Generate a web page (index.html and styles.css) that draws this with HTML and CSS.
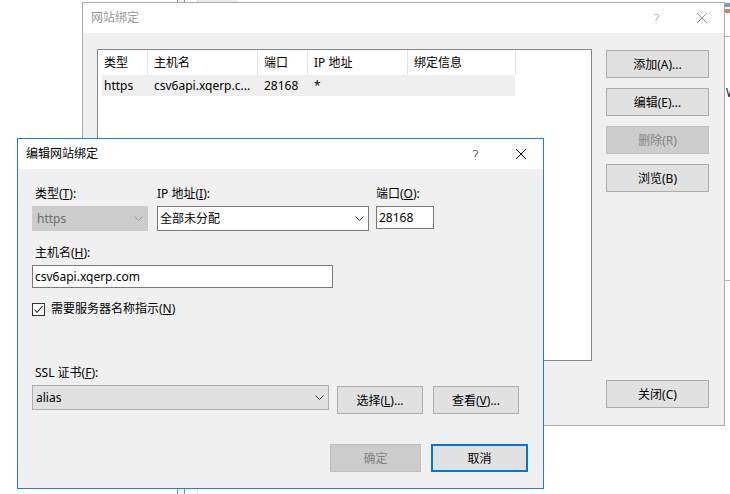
FILE: index.html
```html
<!DOCTYPE html>
<html lang="zh-CN">
<head>
    <meta charset="UTF-8">
    <meta name="viewport" content="width=device-width, initial-scale=1.0">
    <title>编辑网站绑定</title>
    <link rel="stylesheet" href="styles.css">
</head>
<body>
    <div class="desktop">
        <!-- bits of windows behind the dialogs -->
        <div class="behind behind-a"></div>
        <div class="behind behind-b"></div>
        <div class="edge">
            <span class="edge-icon blue"></span>
            <span class="edge-icon red"></span>
            <span class="edge-line"></span>
            <span class="edge-text">W</span>
            <span class="edge-line low"></span>
        </div>

        <div class="window bindings">
            <div class="titlebar">
                <span class="title">网站绑定</span>
                <span class="tb-btn help">?</span>
                <span class="tb-btn">
                    <svg width="10" height="10" viewBox="0 0 10 10"><path d="M0 0L10 10M10 0L0 10" stroke="#999" stroke-width="1" fill="none"/></svg>
                </span>
            </div>
            <div class="bindings-body">
                <div class="list">
                    <div class="list-head">
                        <span class="cell c1">类型</span>
                        <span class="cell c2">主机名</span>
                        <span class="cell c3">端口</span>
                        <span class="cell c4">IP 地址</span>
                        <span class="cell c5">绑定信息</span>
                    </div>
                    <div class="list-row">
                        <span class="cell c1">https</span>
                        <span class="cell c2">csv6api.xqerp.c...</span>
                        <span class="cell c3">28168</span>
                        <span class="cell c4">*</span>
                        <span class="cell c5"></span>
                    </div>
                </div>
                <div class="side">
                    <button class="btn side-btn">添加(A)...</button>
                    <button class="btn side-btn">编辑(E)...</button>
                    <button class="btn side-btn" disabled>删除(R)</button>
                    <button class="btn side-btn">浏览(B)</button>
                    <button class="btn side-btn btn-close">关闭(C)</button>
                </div>
            </div>
        </div>

        <div class="window edit">
            <div class="titlebar">
                <span class="title">编辑网站绑定</span>
                <span class="tb-btn help">?</span>
                <span class="tb-btn">
                    <svg width="10" height="10" viewBox="0 0 10 10"><path d="M0 0L10 10M10 0L0 10" stroke="#000" stroke-width="1" fill="none"/></svg>
                </span>
            </div>
            <div class="edit-body">
                <div class="field-row">
                    <div class="field field-type">
                        <label class="label indent">类型(<u>T</u>):</label>
                        <div class="combo combo-disabled">
                            <span class="combo-text">https</span>
                            <svg width="9" height="5" viewBox="0 0 9 5"><polyline points="0.5,0.5 4.5,4.5 8.5,0.5" fill="none" stroke="#9a9a9a"/></svg>
                        </div>
                    </div>
                    <div class="field field-ip">
                        <label class="label">IP 地址(<u>I</u>):</label>
                        <div class="combo combo-list">
                            <span class="combo-text">全部未分配</span>
                            <svg width="9" height="5" viewBox="0 0 9 5"><polyline points="0.5,0.5 4.5,4.5 8.5,0.5" fill="none" stroke="#333"/></svg>
                        </div>
                    </div>
                    <div class="field field-port">
                        <label class="label">端口(<u>O</u>):</label>
                        <div class="textbox port">28168</div>
                    </div>
                </div>

                <label class="label indent host-label">主机名(<u>H</u>):</label>
                <div class="textbox host">csv6api.xqerp.com</div>

                <div class="check-row">
                    <span class="checkbox">
                        <svg width="11" height="11" viewBox="0 0 11 11"><polyline points="1.5,5.5 4,8.5 9.5,2" fill="none" stroke="#000" stroke-width="1"/></svg>
                    </span>
                    <span>需要服务器名称指示(<u>N</u>)</span>
                </div>

                <label class="label indent ssl-label">SSL 证书(<u>F</u>):</label>
                <div class="ssl-row">
                    <div class="combo combo-ssl">
                        <span class="combo-text">alias</span>
                        <svg width="9" height="5" viewBox="0 0 9 5"><polyline points="0.5,0.5 4.5,4.5 8.5,0.5" fill="none" stroke="#333"/></svg>
                    </div>
                    <button class="btn ssl-btn">选择(<u>L</u>)...</button>
                    <button class="btn ssl-btn view">查看(<u>V</u>)...</button>
                </div>

                <div class="dialog-buttons">
                    <button class="btn ok" disabled>确定</button>
                    <button class="btn cancel">取消</button>
                </div>
            </div>
        </div>
    </div>
</body>
</html>
```

FILE: styles.css
```css
* {
    box-sizing: border-box;
}

body {
    margin: 0;
    background-color: #fff;
    font-family: "Noto Sans", "Noto Sans CJK SC", sans-serif;
    font-size: 12px;
    line-height: 16px;
    color: #000;
}

.desktop {
    position: relative;
    width: 730px;
    height: 494px;
    overflow: hidden;
}

u {
    text-decoration: underline;
    text-underline-offset: 1px;
}

/* things peeking out behind the dialogs */
.behind {
    position: absolute;
    top: 0;
    height: 494px;
}

.behind-a {
    left: 177px;
    width: 8px;
    background-color: #f0f0f0;
    border-left: 1px solid #8a8a8a;
    border-right: 1px solid #8a8a8a;
}

.behind-b {
    left: 197px;
    width: 41px;
    border-left: 1px solid #e2e2e2;
    background: linear-gradient(#ececec 0 2px, transparent 2px);
}

.edge {
    position: absolute;
    left: 725px;
    top: 3px;
    width: 5px;
    display: flex;
    flex-direction: column;
}

.edge-icon {
    width: 5px;
    height: 4px;
    margin-bottom: 2px;
}

.edge-icon.blue {
    background-color: #6d9fd0;
}

.edge-icon.red {
    background-color: #d9824f;
}

.edge-line {
    height: 1px;
    margin-top: 21px;
    background-color: #a9b4d0;
}

.edge-line.low {
    margin-top: 181px;
}

.edge-text {
    margin-top: 50px;
    margin-left: 1px;
    font-size: 12px;
    line-height: 12px;
    color: #222;
}

/* windows */
.window {
    position: absolute;
    display: flex;
    flex-direction: column;
    background-color: #f0f0f0;
}

.bindings {
    left: 82px;
    top: 2px;
    width: 643px;
    height: 424px;
    border: 1px solid #aaaaaa;
}

.edit {
    left: 17px;
    top: 138px;
    width: 527px;
    height: 351px;
    border: 1px solid #1883d7;
}

.titlebar {
    height: 30px;
    display: flex;
    align-items: center;
    background-color: #fff;
}

.title {
    flex: 1;
    padding-left: 8px;
}

.bindings .title,
.bindings .help {
    color: #999;
}

.tb-btn {
    width: 45px;
    height: 30px;
    display: flex;
    align-items: center;
    justify-content: center;
}

.help {
    font-family: "DejaVu Sans", sans-serif;
    font-size: 14px;
    font-weight: 300;
    padding-top: 1px;
}

/* 网站绑定 body */
.bindings-body {
    display: flex;
    align-items: flex-start;
    padding: 16px 14px 0 14px;
}

.list {
    width: 495px;
    height: 312px;
    border: 1px solid #828790;
    background-color: #fff;
}

.list-head,
.list-row {
    display: flex;
}

.list-head {
    height: 25px;
    line-height: 25px;
}

.list-head .cell {
    border-right: 1px solid #e5e5e5;
}

.list-row {
    height: 21px;
    line-height: 21px;
    width: 413px;
    margin-left: 4px;
    background-color: #efefef;
}

.cell {
    padding-left: 6px;
    white-space: nowrap;
    overflow: hidden;
}

.c1 { width: 50px; }
.c2 { width: 110px; }
.c3 { width: 50px; }
.c4 { width: 100px; }
.c5 { width: 108px; }

.list-row .c1 {
    width: 46px;
    padding-left: 2px;
}

.list-row .c5 {
    width: 107px;
}

.side {
    margin-left: 14px;
    margin-top: 1px;
    height: 358px;
    display: flex;
    flex-direction: column;
    gap: 10px;
}

/* buttons */
.btn {
    height: 28px;
    padding: 0;
    font-family: inherit;
    font-size: 12px;
    color: #000;
    background-color: #e1e1e1;
    border: 1px solid #adadad;
    border-radius: 0;
}

.btn:disabled {
    background-color: #cccccc;
    border-color: #bfbfbf;
    color: #838383;
}

.side-btn {
    width: 103px;
}

.btn-close {
    margin-top: auto;
}

/* 编辑网站绑定 body */
.edit-body {
    display: flex;
    flex-direction: column;
    align-items: flex-start;
    padding: 17px 0 0 14px;
}

.label {
    display: block;
    height: 16px;
    margin-bottom: 4px;
}

.label.indent {
    padding-left: 3px;
}

.field-row {
    display: flex;
}

.field {
    display: flex;
    flex-direction: column;
}

.field-type {
    width: 116px;
    margin-right: 9px;
}

.field-ip {
    width: 212px;
    margin-right: 7px;
}

.field-port {
    width: 58px;
}

.combo {
    height: 25px;
    display: flex;
    align-items: center;
    justify-content: space-between;
    border: 1px solid #7a7a7a;
    background-color: #fff;
    padding: 0 4px 0 2px;
}

.combo-disabled {
    background-color: #cccccc;
    border-color: #cccccc;
    color: #6d6d6d;
    padding-left: 4px;
}

.combo-ssl {
    width: 297px;
    background-color: #e1e1e1;
    border-color: #adadad;
    padding-left: 3px;
}

.textbox {
    height: 23px;
    line-height: 21px;
    border: 1px solid #7a7a7a;
    background-color: #fff;
    padding-left: 2px;
}

.host-label {
    margin-top: 14px;
}

.host {
    width: 301px;
}

.check-row {
    display: flex;
    align-items: center;
    height: 16px;
    margin-top: 13px;
}

.checkbox {
    width: 13px;
    height: 13px;
    margin-right: 6px;
    border: 1px solid #333;
    background-color: #fff;
    display: flex;
}

.ssl-label {
    margin-top: 48px;
}

.ssl-row {
    display: flex;
    align-items: flex-start;
}

.ssl-btn {
    width: 86px;
    margin-left: 8px;
    margin-top: 1px;
}

.ssl-btn.view {
    margin-left: 10px;
}

.dialog-buttons {
    display: flex;
    margin-top: 30px;
    margin-left: 298px;
}

.ok {
    width: 91px;
}

.cancel {
    width: 97px;
    margin-left: 10px;
    border: 2px solid #0078d7;
}
```
